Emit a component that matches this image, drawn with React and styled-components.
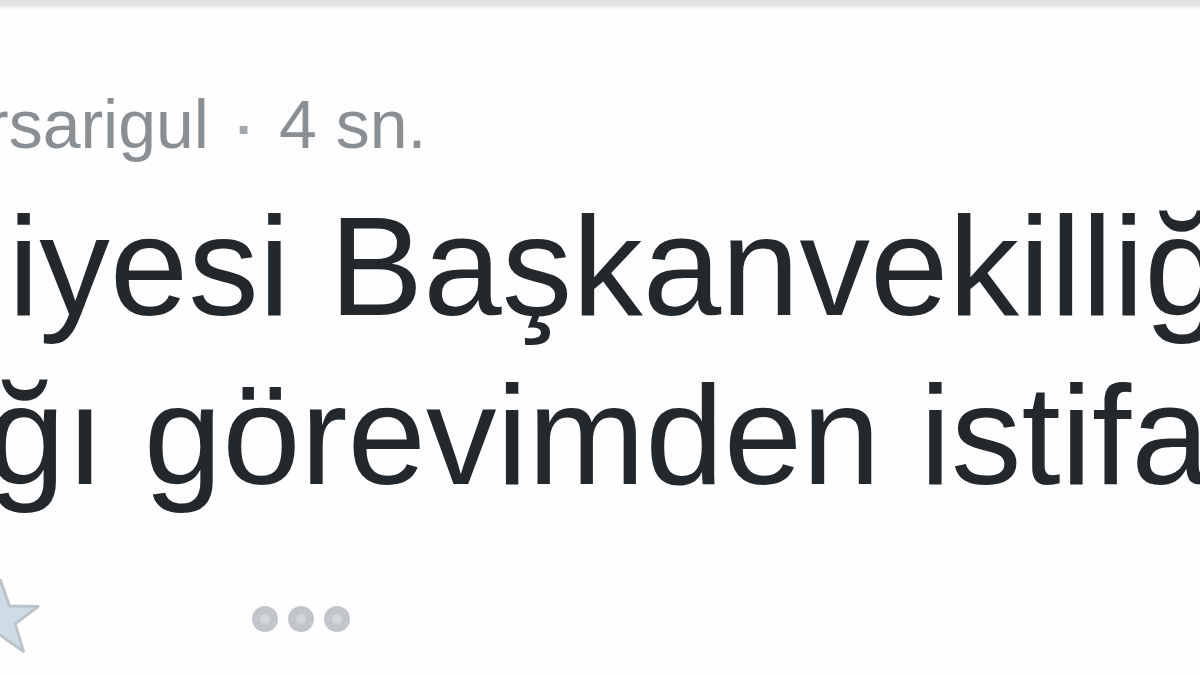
import styled, { createGlobalStyle } from 'styled-components';

const GlobalStyle = createGlobalStyle`
  html, body {
    margin: 0;
    padding: 0;
    background: #fefefe;
  }
  body {
    font-family: "Liberation Sans", Arial, sans-serif;
  }
`;

const tweet = {
  handle: 'rsarigul',
  time: '4 sn.',
  lines: [
    { text: 'iyesi Başkanvekilliğini', shift: 8 },
    { text: 'ğı görevimden istifa ettim.', shift: -13 },
  ],
};

const Star = () => (
  <svg width="80" height="80" viewBox="-40 -40 80 80">
    <polygon
      points="0,-40 9.4,-12.9 38,-12.4 15.2,4.9 23.5,32.4 0,16 -23.5,32.4 -15.2,4.9 -38,-12.4 -9.4,-12.9"
      fill="#cfdce5"
      stroke="#bcc4ca"
      strokeWidth="3"
      strokeLinejoin="round"
    />
  </svg>
);

const App = () => {
  return (
    <>
      <GlobalStyle />
      <St.Page>
        <St.TopEdge />
        <St.Header>
          <St.Handle>{tweet.handle}</St.Handle>
          <St.Dot>·</St.Dot>
          <St.Time>{tweet.time}</St.Time>
        </St.Header>
        <St.Body>
          {tweet.lines.map((line) => (
            <St.Line key={line.text} $shift={line.shift}>
              {line.text}
            </St.Line>
          ))}
        </St.Body>
        <St.Actions>
          <St.Favorite>
            <Star />
          </St.Favorite>
          <St.More>
            <St.MoreDot />
            <St.MoreDot />
            <St.MoreDot />
          </St.More>
        </St.Actions>
      </St.Page>
    </>
  );
};

export default App;

const St = {
  Page: styled.main`
    display: flex;
    flex-direction: column;

    width: 1200px;
    height: 675px;
    overflow: hidden;

    background: #fefefe;
  `,
  TopEdge: styled.div`
    flex: none;
    height: 10px;
    background: linear-gradient(#dedede, #e6e6e6 55%, #fefefe);
  `,
  Header: styled.div`
    display: flex;
    align-items: baseline;

    margin: 74px 0 0 -14px;

    font-size: 68px;
    line-height: 80px;
    color: #8a8f94;
    white-space: nowrap;
  `,
  Handle: styled.span``,
  Dot: styled.span`
    margin: 0 25px 0 27px;
    font-size: 0.8em;
    font-weight: 700;
    color: #a3a8ac;
  `,
  Time: styled.span``,
  Body: styled.section`
    display: flex;
    flex-direction: column;

    margin-top: 12px;
  `,
  Line: styled.p`
    margin: 0 0 0 ${({ $shift }) => $shift}px;

    font-size: 141px;
    line-height: 169px;
    color: #23282d;
    white-space: nowrap;
  `,
  Actions: styled.footer`
    display: flex;
    align-items: center;
    gap: 212px;

    height: 80px;
    margin-top: 59px;
  `,
  Favorite: styled.div`
    display: flex;
    margin-left: -40px;
  `,
  More: styled.div`
    display: flex;
    gap: 10px;
  `,
  MoreDot: styled.span`
    width: 26px;
    height: 26px;
    border-radius: 50%;
    background: radial-gradient(circle, #d4d7da 0 4px, #c2c6ca 6px);
  `,
};
